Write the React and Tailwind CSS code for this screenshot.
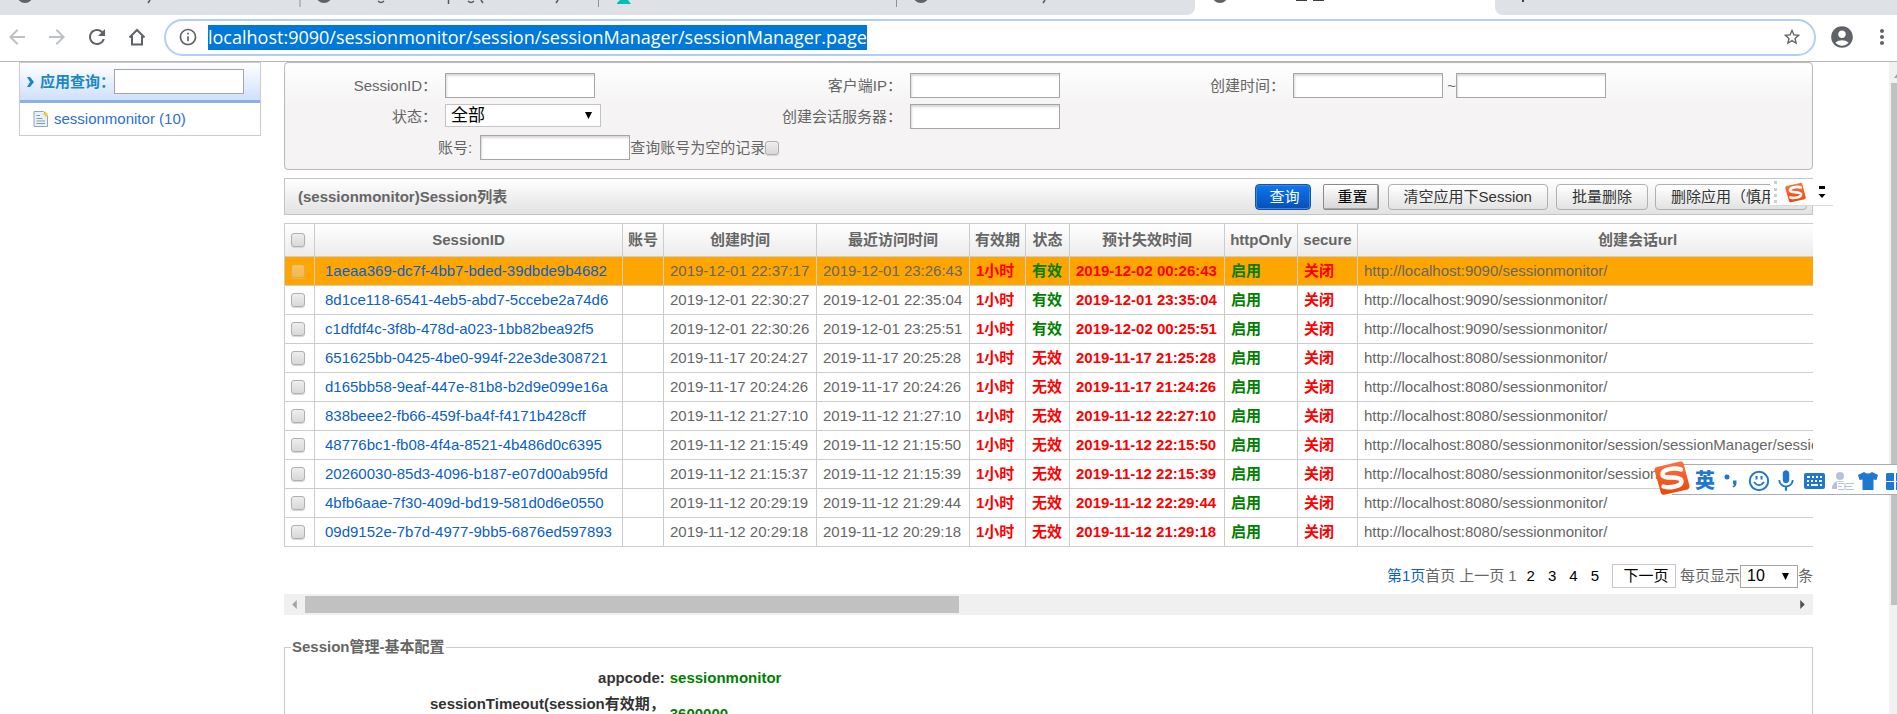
import React from "react";
import {
  MdArrowBack,
  MdArrowForward,
  MdRefresh,
  MdInfoOutline,
  MdStarBorder,
  MdAccountCircle,
  MdMoreVert,
  MdMic,
} from "react-icons/md";

const rows = [
  ["1aeaa369-dc7f-4bb7-bded-39dbde9b4682", "2019-12-01 22:37:17", "2019-12-01 23:26:43", true, "2019-12-02 00:26:43", "http://localhost:9090/sessionmonitor/"],
  ["8d1ce118-6541-4eb5-abd7-5ccebe2a74d6", "2019-12-01 22:30:27", "2019-12-01 22:35:04", true, "2019-12-01 23:35:04", "http://localhost:9090/sessionmonitor/"],
  ["c1dfdf4c-3f8b-478d-a023-1bb82bea92f5", "2019-12-01 22:30:26", "2019-12-01 23:25:51", true, "2019-12-02 00:25:51", "http://localhost:9090/sessionmonitor/"],
  ["651625bb-0425-4be0-994f-22e3de308721", "2019-11-17 20:24:27", "2019-11-17 20:25:28", false, "2019-11-17 21:25:28", "http://localhost:8080/sessionmonitor/"],
  ["d165bb58-9eaf-447e-81b8-b2d9e099e16a", "2019-11-17 20:24:26", "2019-11-17 20:24:26", false, "2019-11-17 21:24:26", "http://localhost:8080/sessionmonitor/"],
  ["838beee2-fb66-459f-ba4f-f4171b428cff", "2019-11-12 21:27:10", "2019-11-12 21:27:10", false, "2019-11-12 22:27:10", "http://localhost:8080/sessionmonitor/"],
  ["48776bc1-fb08-4f4a-8521-4b486d0c6395", "2019-11-12 21:15:49", "2019-11-12 21:15:50", false, "2019-11-12 22:15:50", "http://localhost:8080/sessionmonitor/session/sessionManager/sessionManager.page"],
  ["20260030-85d3-4096-b187-e07d00ab95fd", "2019-11-12 21:15:37", "2019-11-12 21:15:39", false, "2019-11-12 22:15:39", "http://localhost:8080/sessionmonitor/session/sessionManager/sessionManager.page"],
  ["4bfb6aae-7f30-409d-bd19-581d0d6e0550", "2019-11-12 20:29:19", "2019-11-12 21:29:44", false, "2019-11-12 22:29:44", "http://localhost:8080/sessionmonitor/"],
  ["09d9152e-7b7d-4977-9bb5-6876ed597893", "2019-11-12 20:29:18", "2019-11-12 20:29:18", false, "2019-11-12 21:29:18", "http://localhost:8080/sessionmonitor/"],
];

const checkbox =
  "block size-[14px] shrink-0 appearance-none rounded-[3px] border border-[#b0b0b0] bg-linear-to-b from-[#eeeeee] to-[#d8d8d8] shadow-[0_1px_1px_#d4d4d4] disabled:opacity-40";
const field =
  "block h-[25px] w-[150px] border border-[#a5a5a5] bg-white px-1 shadow-[inset_1px_2px_2px_#d9d9d9] outline-none";
const cell = "border border-[#cccccc] px-[6px] py-0";
const button =
  "h-[26px] rounded-[4px] border border-[#b0b0b0] bg-linear-to-b from-white to-[#e2e2e2] px-[15px] whitespace-nowrap text-[#333]";

function Caret({ className }) {
  return (
    <svg viewBox="0 0 8 8" className={className} aria-hidden="true">
      <path d="M0 0h8L4 8z" fill="#000" />
    </svg>
  );
}

function SogouLogo({ className }) {
  return (
    <svg viewBox="0 0 36 34" className={className} aria-hidden="true">
      <defs>
        <linearGradient id="sogou" x1="0" y1="0" x2="0" y2="1">
          <stop offset="0" stopColor="#fb7340" />
          <stop offset="1" stopColor="#f04408" />
        </linearGradient>
      </defs>
      <path d="M3 6 26 0.500Q29 0 29.600 2.500L35.500 25Q36 27.500 33.500 28.500L10 33.800Q7.500 34.200 6.800 31.500L0.600 9.500Q0 7 3 6Z" fill="url(#sogou)" />
      <path d="M27 8.500C20 6 8 8.500 8.500 13.500C9 19 26.500 14 27.500 20C28.300 25.500 15 27.500 9.500 25.500" fill="none" stroke="#fff" strokeWidth="4.500" strokeLinecap="round" />
    </svg>
  );
}

function TabStrip() {
  return (
    <div className="flex h-[15px] shrink-0 overflow-hidden bg-white">
      <div className="flex w-[1195px] rounded-br-lg bg-[#dee1e6]">
        <svg viewBox="0 0 1195 15" className="h-[15px] w-full" aria-hidden="true">
          <g fill="none" stroke="#5f6368" strokeWidth="3">
            <circle cx="25" cy="-5" r="6.500" />
            <circle cx="324" cy="-5" r="6.500" />
            <circle cx="921" cy="-5" r="6.500" />
          </g>
          <path d="M300 0v7M598.500 0v7M896.500 0v7" stroke="#8e9197" strokeWidth="1" />
          <path d="M617 4v-1l3-3h8l3 4z" fill="#00bfb3" />
          <g fill="none" stroke="#55585d" strokeWidth="1.500">
            <path d="M150 0l-2 3M558 0l-2 3M1045 0l-2 3M378 1q3 3 6 0M448.500 0v4M468 1q3 3 6 0M481 0l2 3" />
          </g>
        </svg>
      </div>
      <div className="w-[300px] shrink-0">
        <svg viewBox="0 0 300 15" className="h-[15px] w-full" aria-hidden="true">
          <circle cx="25" cy="-5" r="6.500" fill="none" stroke="#5f6368" strokeWidth="3" />
          <path d="M101 0h11M118 0h11" stroke="#3c4043" strokeWidth="2" />
        </svg>
      </div>
      <div className="flex-1 rounded-bl-lg bg-[#dee1e6] pl-[27px]">
        <div className="h-[2px] w-[2px] bg-[#3c4043]" />
      </div>
    </div>
  );
}

function AddressBar() {
  return (
    <div className="flex h-[47px] shrink-0 items-center border-b border-[#b5b5b5] pl-[5px] pr-[3px] pb-[2px] text-[#5f6368]">
      <button aria-label="后退" className="mr-4 text-[#bdc1c6]"><MdArrowBack size={24} /></button>
      <button aria-label="前进" className="mr-4 text-[#bdc1c6]"><MdArrowForward size={24} /></button>
      <button aria-label="刷新" className="mr-4"><MdRefresh size={24} /></button>
      <button aria-label="主页" className="mr-[15px]">
        <svg viewBox="0 0 24 24" className="size-6" fill="none" stroke="currentColor" strokeWidth="2">
          <path d="M4.500 12.500 12 5l7.500 7.500M7 11v8.500h10V11" />
        </svg>
      </button>
      <div className="flex h-[37px] flex-1 items-center rounded-full border-2 border-[#b3cdfb] pl-3 pr-3">
        <MdInfoOutline size={20} className="mr-[10px]" />
        <input
          aria-label="地址"
          readOnly
          defaultValue="localhost:9090/sessionmonitor/session/sessionManager/sessionManager.page"
          className="field-sizing-content h-[25px] bg-[#0078d7] font-['Open_Sans',sans-serif] text-[18px] leading-[25px] text-white outline-none"
        />
        <button aria-label="收藏" className="ml-auto"><MdStarBorder size={20} /></button>
      </div>
      <button aria-label="用户" className="ml-[13px]"><MdAccountCircle size={26} /></button>
      <button aria-label="菜单" className="ml-[15px]"><MdMoreVert size={24} /></button>
    </div>
  );
}

function Sidebar() {
  return (
    <aside className="w-[242px] shrink-0 self-start border border-[#cccccc]">
      <div className="flex h-[40px] items-center border-b-3 border-[#8ab0e6] bg-linear-to-b from-white to-[#cfe0fb] pl-[6px]">
        <svg viewBox="0 0 8 10" className="mr-[6px] h-[10px] w-[8px] shrink-0" aria-hidden="true">
          <path d="M1 0h3l4 5-4 5H1l3-5z" fill="#1b86c8" />
        </svg>
        <label htmlFor="app" className="w-[74px] shrink-0 font-bold whitespace-nowrap text-[#1b86c8]">应用查询：</label>
        <input id="app" className="h-[25px] w-[130px] border border-[#a5a5a5] bg-white px-1 outline-none" />
      </div>
      <a href="#sessionmonitor" className="flex h-[32px] items-center gap-[5px] pl-[13px] text-[#2b6fd6]">
        <svg viewBox="0 0 16 16" className="size-4" aria-hidden="true">
          <path d="M1 .5h9.500L14.500 5v10.500H1z" fill="#e9f1f7" stroke="#8fa9bb" />
          <path d="M3.500 4.500H7M3.500 7.500h6M3.500 10h8.500M3.500 12.500h8.500" stroke="#7d9cb3" />
          <path d="m12.500 0 1 2.200 2.500.8-2.500 1L12.500 6.500l-1-2.500L9 3l2.500-.8z" fill="#ffc61a" />
        </svg>
        sessionmonitor (10)
      </a>
    </aside>
  );
}

function QueryPanel() {
  return (
    <form className="shrink-0 rounded-[4px] border border-[#bdbabb] bg-linear-to-b from-white via-[#f5f3f4] via-40% to-[#f5f3f4] pt-[10px] pb-[9px] shadow-[inset_0_0_1px_#c8c8c8]">
      <div className="grid grid-cols-[152fr_273fr_176fr_263fr_104fr_519fr] items-center gap-x-2 gap-y-[6px]">
        <label htmlFor="sid" className="text-right whitespace-nowrap">SessionID：</label>
        <input id="sid" className={field} />
        <label htmlFor="ip" className="text-right whitespace-nowrap">客户端IP：</label>
        <input id="ip" className={field} />
        <label htmlFor="from" className="text-right whitespace-nowrap">创建时间：</label>
        <div className="flex items-center">
          <input id="from" className={field} />
          <label htmlFor="to" className="w-[13px] text-right">~</label>
          <input id="to" className={field} />
        </div>
        <label htmlFor="state" className="text-right whitespace-nowrap">状态：</label>
        <div className="relative h-[25px] w-[156px]">
          <select id="state" className="h-[23px] w-full appearance-none border border-[#c4c4c4] bg-white pl-[5px] text-[17px] leading-[21px] text-black">
            <option>全部</option>
          </select>
          <Caret className="pointer-events-none absolute top-[8px] right-[9px] size-[7px]" />
        </div>
        <label htmlFor="server" className="text-right whitespace-nowrap">创建会话服务器：</label>
        <input id="server" className={field} />
      </div>
      <div className="mt-[6px] flex items-center pl-[153px]">
        <label htmlFor="account" className="mr-2 whitespace-nowrap">账号:</label>
        <input id="account" className={field} />
        <label htmlFor="empty" className="whitespace-nowrap">查询账号为空的记录</label>
        <input id="empty" type="checkbox" className={checkbox} />
      </div>
    </form>
  );
}

function ListHeader() {
  return (
    <div className="flex h-[37px] shrink-0 items-center border border-[#c6c3c3] bg-linear-to-b from-white to-[#e2e2e2] pl-[13px] pr-[5px]">
      <h2 className="mr-auto font-bold">(sessionmonitor)Session列表</h2>
      <button className="mr-3 h-[26px] w-[56px] rounded-[4px] border border-[#1353a8] bg-linear-to-b from-[#0f76f2] to-[#0650b4] pl-1 whitespace-nowrap text-white shadow-[inset_0_0_0_1px_#3d86dc]">查询</button>
      <button className="mr-[9px] h-[26px] w-[56px] rounded-[2px] border border-[#8a8a8a] bg-linear-to-b from-white to-[#d6d6d6] pl-1 whitespace-nowrap text-black shadow-[inset_-1px_-1px_0_#a8a8a8]">重置</button>
      <button className={button + " mr-2"}>清空应用下Session</button>
      <button className={button + " mr-[7px]"}>批量删除</button>
      <button className={button}>删除应用（慎用）</button>
    </div>
  );
}

function SessionTable() {
  const head = ["SessionID", "账号", "创建时间", "最近访问时间", "有效期", "状态", "预计失效时间", "httpOnly", "secure", "创建会话url"];
  return (
    <div className="shrink-0 overflow-hidden">
      <table className="w-[1634px] table-fixed border-collapse whitespace-nowrap">
        <colgroup>
          <col className="w-[30px]" />
          <col className="w-[308px]" />
          <col className="w-[41px]" />
          <col className="w-[153px]" />
          <col className="w-[153px]" />
          <col className="w-[56px]" />
          <col className="w-[44px]" />
          <col className="w-[155px]" />
          <col className="w-[73px]" />
          <col className="w-[60px]" />
          <col className="w-[560px]" />
        </colgroup>
        <thead>
          <tr className="h-[33px] bg-linear-to-b from-white to-[#ebebeb]">
            <th className={cell}><input type="checkbox" aria-label="全选" className={checkbox} /></th>
            {head.map((h) => (
              <th key={h} className="border border-[#cccccc] p-0 text-center font-bold">{h}</th>
            ))}
          </tr>
        </thead>
        <tbody>
          {rows.map(([id, created, visited, valid, expires, url], i) => (
            <tr key={id} className={i === 0 ? "h-[29px] bg-[#ffa500]" : "h-[29px] bg-white"}>
              <td className={cell}><input type="checkbox" aria-label={id} disabled={i === 0} className={checkbox} /></td>
              <td className="border border-[#cccccc] px-[10px] py-0"><a href={"#" + id} className="text-[#0a60c8]">{id}</a></td>
              <td className={cell} />
              <td className={cell}>{created}</td>
              <td className={cell}>{visited}</td>
              <td className={cell + " font-bold text-[#ff0000]"}>1小时</td>
              <td className={cell + (valid ? " font-bold text-[#008000]" : " font-bold text-[#ff0000]")}>{valid ? "有效" : "无效"}</td>
              <td className={cell + " font-bold text-[#ff0000]"}>{expires}</td>
              <td className={cell + " font-bold text-[#008000]"}>启用</td>
              <td className={cell + " font-bold text-[#ff0000]"}>关闭</td>
              <td className={cell}>{url}</td>
            </tr>
          ))}
        </tbody>
      </table>
    </div>
  );
}

function Pager() {
  return (
    <div className="mt-[9px] flex h-6 shrink-0 items-center justify-end whitespace-nowrap">
      <span className="text-[#0a60c8]">第1页</span>
      <span className="mr-1">首页</span>
      <span className="mr-1">上一页</span>
      <span className="mr-[10px]">1</span>
      {[2, 3, 4, 5].map((n) => (
        <a key={n} href={"#page" + n} className="mr-[13px] text-black">{n}</a>
      ))}
      <button className="mr-1 h-6 w-[64px] border border-[#c8c8c8] bg-white pl-1 text-black">下一页</button>
      <label htmlFor="size">每页显示</label>
      <div className="relative">
        <select id="size" className="block h-[23px] w-[58px] appearance-none border border-[#a5a5a5] bg-white pl-[6px] text-[16px] text-black">
          <option>10</option>
        </select>
        <Caret className="pointer-events-none absolute top-[8px] right-[9px] size-[7px]" />
      </div>
      <span>条</span>
    </div>
  );
}

function SogouMini() {
  return (
    <div className="absolute top-[179px] right-[64px] flex h-[27px] w-[63px] items-center border-b border-[#d8d8d8] bg-white pl-1">
      <div className="mr-2 h-[22px] border-l-3 border-dotted border-[#cfcfcf]" />
      <SogouLogo className="mr-3 h-[21px] w-[21px]" />
      <svg viewBox="0 0 8 14" className="h-[14px] w-[8px]" aria-hidden="true">
        <path d="M1 1h6v3H1zM0.500 9h7L4 13z" fill="#000" />
      </svg>
    </div>
  );
}

function SogouBar() {
  return (
    <div className="absolute top-[461px] right-0 flex h-[34px] w-[243px] items-center overflow-hidden text-[#1f77cf]">
      <div className="absolute inset-x-0 top-[3px] left-[18px] h-[31px] border-y border-[#a9abb8] bg-white" />
      <SogouLogo className="relative h-[34px] w-[36px] shrink-0" />
      <div className="relative flex items-center pt-[6px]">
        <span className="ml-[5px] text-[20px] leading-5 font-black">英</span>
        <svg viewBox="0 0 14 14" className="ml-[9px] h-[14px] w-[14px] shrink-0" fill="currentColor" aria-hidden="true">
          <circle cx="3" cy="3" r="2.500" />
          <path d="M9 6.500h3.500v2.500q0 3-3 4.500l-1-1q1.500-1 1.500-2.500H9z" />
        </svg>
        <svg viewBox="0 0 22 22" className="ml-[10px] size-[22px] shrink-0" fill="none" stroke="currentColor" strokeWidth="2" aria-hidden="true">
          <circle cx="11" cy="11" r="9.200" />
          <path d="M6 12q5 6.500 10 0M8.500 6v3.500M13.500 6v3.500" />
        </svg>
        <MdMic size={26} className="ml-[3px] shrink-0" />
        <svg viewBox="0 0 22 16" className="ml-[5px] h-4 w-[22px] shrink-0" aria-hidden="true">
          <rect x="0" y="0" width="21" height="16" rx="2" fill="currentColor" />
          <path d="M3 4h3M8 4h2M12 4h2M16 4h2M3 8h2M7 8h2M11 8h2M15 8h3M3 12h2M7 12h7M16 12h2" stroke="#fff" strokeWidth="2" />
        </svg>
        <svg viewBox="0 0 22 18" className="ml-[6px] h-[18px] w-[22px] shrink-0" aria-hidden="true">
          <circle cx="8" cy="4" r="4" fill="#b7c2da" />
          <path d="M0 17q0-8 8-8 4 0 6 2v6z" fill="#b7c2da" />
          <path d="M5 10h17v8H5z" fill="#fff" />
          <path d="M6 11.500h6M14 11.500h8M6 14.500h4M12 14.500h8M6 17.500h6M14 17.500h8M13 11v7" stroke="#b7c2da" />
        </svg>
        <svg viewBox="0 0 20 18" className="ml-[4px] h-[18px] w-5 shrink-0" fill="currentColor" aria-hidden="true">
          <path d="M6 0q4 3 8 0l6 3-1.500 5-3-.5V18h-11V7.500l-3 .5L0 3z" />
        </svg>
        <svg viewBox="0 0 19 17" className="ml-[8px] h-[17px] w-[19px] shrink-0" fill="currentColor" aria-hidden="true">
          <path d="M1 0h7v8H0V1zM10 0h8v8h-8zM0 9h8v8H1l-1-1zM10 9h8v8h-8z" />
        </svg>
      </div>
    </div>
  );
}

export default function App() {
  return (
    <div className="relative flex h-screen flex-col overflow-hidden bg-white font-['Liberation_Sans','Noto_Sans_CJK_SC',sans-serif] text-[15px] leading-5 text-[#666]">
      <TabStrip />
      <AddressBar />
      <div className="flex min-h-0 flex-1">
        <div className="flex min-w-0 flex-1 gap-[23px] pl-[19px] pr-[76px]">
          <Sidebar />
          <main className="flex min-w-0 flex-1 flex-col gap-2">
            <QueryPanel />
            <ListHeader />
            <SessionTable />
            <Pager />
            <div className="-mt-[2px] flex h-[21px] shrink-0 items-center justify-between bg-[#f0f0f0] px-2">
              <svg viewBox="0 0 5 10" className="h-[9px] w-[5px]" aria-hidden="true"><path d="M5 0v10L0 5z" fill="#a3a3a3" /></svg>
              <div className="mx-2 flex-1"><div className="h-[17px] w-[44%] bg-[#c1c1c1]" /></div>
              <svg viewBox="0 0 5 10" className="h-[9px] w-[5px]" aria-hidden="true"><path d="M0 0v10l5-5z" fill="#505050" /></svg>
            </div>
            <fieldset className="mt-[14px] shrink-0 border border-[#cccccc] px-[6px] pt-[8px] pb-8">
              <legend className="px-px font-bold">Session管理-基本配置</legend>
              <table className="w-full">
                <tbody className="font-bold">
                  <tr>
                    <th className="w-1/4 py-[3px] pr-[5px] text-right whitespace-nowrap text-[#333]">appcode:</th>
                    <td className="py-[3px] text-[#008000]">sessionmonitor</td>
                  </tr>
                  <tr className="h-[46px]">
                    <th className="py-[3px] pr-[5px] text-right align-top whitespace-nowrap text-[#333]">sessionTimeout(session有效期，</th>
                    <td className="text-[#008000]">3600000</td>
                  </tr>
                </tbody>
              </table>
            </fieldset>
          </main>
        </div>
        <div className="flex w-2 shrink-0 flex-col items-end bg-[#f1f1f1]">
          <svg viewBox="0 0 3 4" className="mt-3 h-1 w-[3px]" aria-hidden="true"><path d="M0 4 3 0v4z" fill="#a3a3a3" /></svg>
          <div className="mt-[5px] h-[80%] w-[6px] bg-[#c1c1c1]" />
        </div>
      </div>
      <SogouMini />
      <SogouBar />
    </div>
  );
}
